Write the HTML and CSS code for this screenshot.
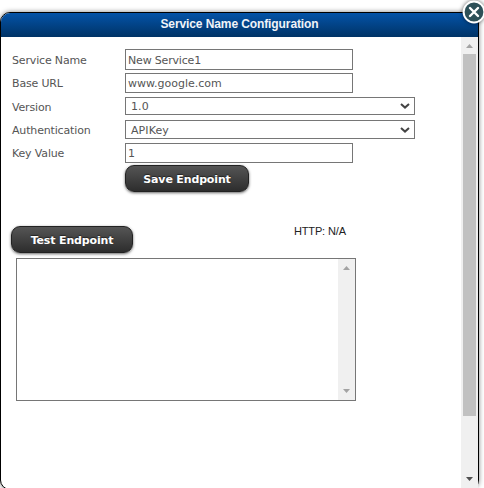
FILE: index.html
```html
<!DOCTYPE html>
<html lang="en">
<head>
<meta charset="utf-8">
<title>Service Name Configuration</title>
<link rel="stylesheet" href="styles.css">
</head>
<body>
<section class="dialog">
  <header class="title"><span>Service Name Configuration</span></header>
  <div class="body">
    <main class="content">
      <form class="form">
        <label class="tall-label">Service Name</label><div class="field tall"><span class="tight">New Service1</span></div>
        <label>Base URL</label><div class="field"><span>www.google.com</span></div>
        <label>Version</label>
        <div class="field select short"><span class="loose">1.0</span><svg width="10" height="6" viewBox="0 0 10 6"><path d="M1 1l4 3.6L9 1"/></svg></div>
        <label>Authentication</label>
        <div class="field select"><span class="loose">APIKey</span><svg width="10" height="6" viewBox="0 0 10 6"><path d="M1 1l4 3.6L9 1"/></svg></div>
        <label>Key Value</label><div class="field"><span>1</span></div>
        <button type="button" class="button save">Save Endpoint</button>
      </form>
      <div class="test-row">
        <button type="button" class="button test">Test Endpoint</button>
        <span class="status">HTTP: N/A</span>
      </div>
      <div class="output">
        <div class="inner-bar">
          <svg width="7" height="4" viewBox="0 0 7 4"><path d="M0 4L3.5 0 7 4z"/></svg>
          <svg width="7" height="4" viewBox="0 0 7 4"><path d="M0 0h7L3.5 4z"/></svg>
        </div>
      </div>
    </main>
    <div class="scrollbar">
      <svg class="up" width="7" height="4" viewBox="0 0 7 4"><path d="M0 4L3.5 0 7 4z"/></svg>
      <div class="thumb"></div>
      <svg class="down" width="7" height="4" viewBox="0 0 7 4"><path d="M0 0h7L3.5 4z"/></svg>
    </div>
  </div>
  <svg class="close" width="26" height="26" viewBox="0 0 26 26"><circle cx="13" cy="13" r="10.4"/><path d="M9 9l8 8M17 9l-8 8"/></svg>
</section>
</body>
</html>
```
FILE: styles.css
```css
* { box-sizing: border-box; }
html, body { height: 488px; overflow: hidden; }
body {
  margin: 0;
  padding-top: 12px;
  background: #fff;
  color: #555;
  font: 11px/14px "DejaVu Sans", sans-serif;
}
.dialog {
  position: relative;
  width: 479px;
  height: 478px;
  border: 1px solid #000;
  border-radius: 10px;
  background: #fff;
  box-shadow: 0 0 5px rgba(0, 0, 0, .5);
}
.title {
  height: 24px;
  border-radius: 9px 9px 0 0;
  background: linear-gradient(#0453a8, #003366);
  color: #f0f3f8;
  font: bold 12px/22px "Liberation Sans", sans-serif;
  letter-spacing: -.1px;
  text-align: center;
}
.body { display: flex; height: 451px; }
.content { width: 460px; }
.form {
  display: grid;
  grid-template-columns: 113px 290px;
  grid-template-rows: 24px 24px 23px 23px 22px 27px;
  align-items: start;
  padding: 12px 0 0 11px;
}
label { line-height: 22px; letter-spacing: -.16px; }
.tall-label { line-height: 24px; }
.field {
  display: flex;
  align-items: center;
  width: 228px;
  height: 20px;
  padding: 2px 3px 0 2px;
  border: 1px solid #767676;
  background: #fff;
}
.tall { height: 21px; }
.tight { letter-spacing: -.18px; }
.loose { letter-spacing: .1px; }
.select { justify-content: space-between; width: 290px; height: 19px; padding: 2px 4px 0 5px; }
.short { height: 18px; }
.select svg { margin-bottom: 2px; }
.select path { fill: none; stroke: #444; stroke-width: 2; }
.button {
  height: 27px;
  padding: 0;
  border: 1px solid #222;
  border-radius: 9px;
  background: linear-gradient(#555, #2d2d2d);
  box-shadow: 0 1px 3px rgba(0, 0, 0, .6);
  color: #fff;
  font: bold 11px/27px "DejaVu Sans", sans-serif;
  letter-spacing: -.15px;
  text-shadow: 0 -1px 1px rgba(0, 0, 0, .5);
  white-space: nowrap;
}
.save { grid-column: 2; width: 124px; }
.test { width: 122px; }
.test-row { display: flex; margin: 34px 0 0 10px; }
.status {
  margin-left: 161px;
  color: #222;
  font: 11px/11px "Liberation Sans", sans-serif;
  letter-spacing: -.15px;
}
.output {
  display: flex;
  justify-content: flex-end;
  width: 340px;
  height: 143px;
  margin: 5px 0 0 15px;
  border: 1px solid #767676;
}
.inner-bar {
  display: flex;
  flex-direction: column;
  align-items: center;
  justify-content: space-between;
  width: 17px;
  padding: 7px 0;
  background: #f0f0f0;
  fill: #a3a3a3;
}
.scrollbar {
  display: flex;
  flex-direction: column;
  align-items: center;
  width: 17px;
  padding-top: 7px;
  background: #f0f0f0;
}
.up { fill: #a3a3a3; }
.thumb { width: 13px; height: 362px; margin: 6px 0 61px; background: #c1c1c1; }
.down { fill: #505050; }
.close {
  position: absolute;
  top: -14px;
  right: -9px;
  filter: drop-shadow(0 0 2px rgba(0, 0, 0, .6));
}
.close circle { fill: #2d5058; stroke: #fff; stroke-width: 2; }
.close path { stroke: #fff; stroke-width: 2.4; stroke-linecap: round; }
```
